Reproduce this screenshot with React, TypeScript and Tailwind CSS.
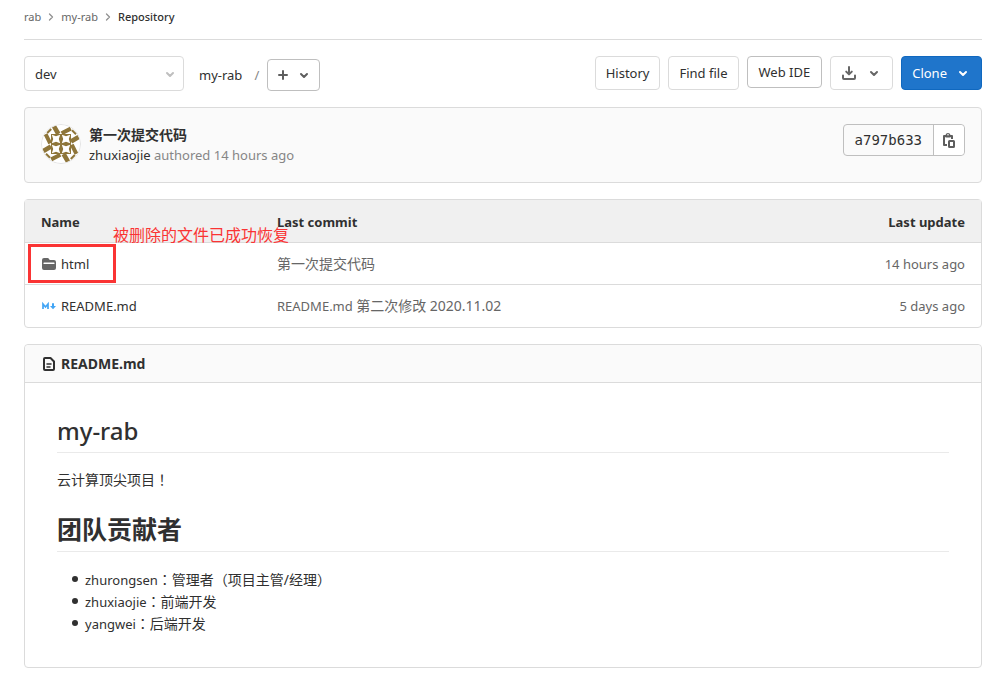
import type { ReactNode } from "react";

const stroke = { fill: "none", stroke: "currentColor", strokeWidth: 2, strokeLinecap: "round", strokeLinejoin: "round" } as const;

function ChevronDown({ className = "" }: { className?: string }) {
  return (
    <svg viewBox="0 0 16 16" className={`size-4 shrink-0 ${className}`} aria-hidden="true">
      <path d="M5 7l3 3 3-3" {...stroke} />
    </svg>
  );
}

function ChevronRight() {
  return (
    <svg viewBox="0 0 8 8" className="size-2 shrink-0 text-[#919191]" aria-hidden="true">
      <path d="M2.5 1l3 3-3 3" {...stroke} strokeWidth={1.3} />
    </svg>
  );
}

function PlusIcon() {
  return (
    <svg viewBox="0 0 16 16" className="size-4 text-[#5e5e5e]" aria-hidden="true">
      <path d="M8 4v8M4 8h8" {...stroke} />
    </svg>
  );
}

function DownloadIcon() {
  return (
    <svg viewBox="0 0 16 16" className="size-4 text-[#666]" aria-hidden="true">
      <path d="M8 2v7M5.2 6.6L8 9.4l2.8-2.8" {...stroke} />
      <path d="M2 10.5V13a1 1 0 001 1h10a1 1 0 001-1v-2.5" {...stroke} />
    </svg>
  );
}

function CopyIcon() {
  return (
    <svg viewBox="0 0 16 16" className="size-4 text-[#5e5e5e]" aria-hidden="true">
      <path d="M6 13H3V4h8v3" {...stroke} strokeLinecap="butt" />
      <path d="M4.5 3a2.6 2.6 0 015 0v2.5h-5z" fill="currentColor" />
      <circle cx="7" cy="2.8" r="0.8" fill="#fff" />
      <rect x="8" y="9" width="5" height="6" rx="0.5" {...stroke} />
    </svg>
  );
}

function FolderIcon() {
  return (
    <svg viewBox="0 0 16 16" className="size-4 shrink-0 text-[#666]" aria-hidden="true">
      <path
        fillRule="evenodd"
        fill="currentColor"
        d="M3 2h3.6c.5 0 1 .3 1.3.7L8.7 4H13a2 2 0 012 2v6a2 2 0 01-2 2H3a2 2 0 01-2-2V4a2 2 0 012-2zm0 4.5a.5.5 0 00-.5.5v1h11V7a.5.5 0 00-.5-.5z"
      />
    </svg>
  );
}

function MarkdownIcon() {
  return (
    <svg viewBox="0 0 16 16" className="size-4 shrink-0 text-[#42a5f5]" aria-hidden="true">
      <path d="M2 11V6l2.5 3L7 6v5" fill="none" stroke="currentColor" strokeWidth="1.7" />
      <path d="M11 5.2h2v2.9h2L12 11.2 9 8.1h2z" fill="currentColor" />
    </svg>
  );
}

function DocumentIcon() {
  return (
    <svg viewBox="0 0 16 16" className="size-4 shrink-0 text-[#303030]" aria-hidden="true">
      <path d="M3 3a1 1 0 011-1h5.5L13 5.5V13a1 1 0 01-1 1H4a1 1 0 01-1-1z" {...stroke} />
      <path d="M6 8h4M6 11h3" {...stroke} strokeWidth={1.5} />
    </svg>
  );
}

function Identicon() {
  return (
    <svg viewBox="0 0 40 40" className="size-10 shrink-0 rounded-full" role="img" aria-label="zhuxiaojie">
      <circle cx="20" cy="20" r="20" fill="#fff" />
      {[0, 90, 180, 270].map((angle) => (
        <g key={angle} transform={`rotate(${angle} 20 20)`}>
          <path d="M10 10h10v10H10z" fill="#8e7539" />
          <path d="M10.8 10.8L15 12.2l4.2-1.4L17.8 15l1.4 4.2L15 17.8l-4.2 1.4L12.2 15z" fill="#fff" />
          <path d="M13 2.4L17.4 10" stroke="#8e7539" strokeWidth="4.6" />
          <path d="M20.6 9.2L29.8 4.6" stroke="#8e7539" strokeWidth="4" />
          <path d="M31 6.2l4 4" stroke="#8e7539" strokeWidth="2" />
        </g>
      ))}
      <circle cx="20" cy="20" r="19.5" fill="none" stroke="#e3e3e3" />
    </svg>
  );
}

/* Chinese text is set one step larger than the Latin text around it. */
function Han({ children }: { children: ReactNode }) {
  return <span className="text-sm">{children}</span>;
}

/* Full-width punctuation, centred in its cell. */
function Mark({ children }: { children: ReactNode }) {
  return <span className="font-['Noto_Sans_CJK_TC',sans-serif] text-sm">{children}</span>;
}

const members = [
  { name: "zhurongsen", role: "管理者（项目主管/经理）" },
  { name: "zhuxiaojie", role: "前端开发" },
  { name: "yangwei", role: "后端开发" },
];

const files = [
  { name: "html", commit: <Han>第一次提交代码</Han>, updated: "14 hours ago", icon: <FolderIcon />, marked: true },
  { name: "README.md", commit: <>README.md <Han>第二次修改 2020.11.02</Han></>, updated: "5 days ago", icon: <MarkdownIcon />, marked: false },
];

const button = "flex items-center rounded border bg-white text-[#303030]";

export default function App() {
  return (
    <div className="min-h-screen bg-white pr-[25px] pb-3 pl-6 font-['Noto_Sans','Noto_Sans_CJK_SC',sans-serif] text-[13px] leading-5 text-[#303030]">
      <nav aria-label="Breadcrumb" className="flex h-10 items-start border-b border-[#dbdbdb] pt-2 text-[11px] leading-[18px]">
        <ol className="flex items-center gap-1.5">
          <li><a href="#rab" className="text-[#666]">rab</a></li>
          <li><ChevronRight /></li>
          <li><a href="#my-rab" className="text-[#666]">my-rab</a></li>
          <li><ChevronRight /></li>
          <li><a href="#repository" className="font-medium">Repository</a></li>
        </ol>
      </nav>

      <div className="mt-4 flex items-start justify-between">
        <div className="flex items-end">
          <div className="relative w-40">
            <select aria-label="Branch" className="h-[35px] w-full appearance-none rounded border border-[#dbdbdb] bg-white px-2.5">
              <option>dev</option>
            </select>
            <ChevronDown className="pointer-events-none absolute top-2.5 right-1.5 text-[#bfbfbf]" />
          </div>
          <a href="#root" className="ml-[15px] pb-1.5">my-rab</a>
          <span className="mx-2 pb-1.5 pl-1 text-[#868686]">/</span>
          <button aria-label="Add" className={`${button} h-8 gap-[5px] border-[#bfbfbf] px-[7px]`}>
            <PlusIcon />
            <ChevronDown className="text-[#5e5e5e]" />
          </button>
        </div>
        <div className="flex items-start gap-2">
          <button className={`${button} h-[34px] border-[#dbdbdb] px-2.5`}>History</button>
          <button className={`${button} h-[34px] border-[#dbdbdb] px-2.5`}>Find file</button>
          <button className={`${button} h-8 border-[#bfbfbf] px-[11px]`}>Web IDE</button>
          <button aria-label="Download" className={`${button} h-[34px] gap-[9px] border-[#dbdbdb] px-2.5`}>
            <DownloadIcon />
            <ChevronDown className="text-[#666]" />
          </button>
          <button className="flex h-[34px] items-center gap-2 rounded border border-[#1068bf] bg-[#1f75cb] px-2.5 text-white">
            Clone
            <ChevronDown />
          </button>
        </div>
      </div>

      <section className="mt-4 flex h-[76px] items-start justify-between rounded border border-[#dbdbdb] bg-[#fafafa] p-4">
        <div className="flex gap-2">
          <Identicon />
          <div className="leading-[21px]">
            <a href="#commit" className="block text-sm leading-[21px] font-bold">第一次提交代码</a>
            <p className="text-[#868686]">
              <a href="#zhuxiaojie" className="text-[#303030]">zhuxiaojie</a> authored <time>14 hours ago</time>
            </p>
          </div>
        </div>
        <div className="flex h-8 rounded border border-[#bfbfbf]">
          <span className="flex items-center px-[11px] font-['DejaVu_Sans_Mono',monospace] text-sm">a797b633</span>
          <button aria-label="Copy commit SHA" className="flex items-center rounded-r border-l border-[#bfbfbf] bg-white px-[7px]">
            <CopyIcon />
          </button>
        </div>
      </section>

      <div className="mt-4 rounded border border-[#dbdbdb]">
        <table className="w-full border-collapse">
          <thead>
            <tr className="h-[42px] border-b border-[#dbdbdb] bg-[#f0f0f0]">
              <th className="w-[236px] px-4 pt-0.5 text-left">Name</th>
              <th className="px-4 pt-0.5 text-left">Last commit</th>
              <th className="px-4 pt-0.5 text-right">Last update</th>
            </tr>
          </thead>
          <tbody>
            {files.map((file) => (
              <tr key={file.name} className="h-[42px] border-b border-[#dbdbdb] last:h-[43px] last:border-b-0">
                <td className="relative px-4 pt-px">
                  <a href={`#${file.name}`} className="flex items-center gap-1">
                    {file.icon}
                    {file.name}
                  </a>
                  {file.marked && (
                    <>
                      <span className="absolute top-px left-[3px] h-[39px] w-[88px] border-3 border-[#fa3434]" />
                      <span className="absolute -top-5 left-[88px] text-base leading-6 whitespace-nowrap text-[#fa3434]">被删除的文件已成功恢复</span>
                    </>
                  )}
                </td>
                <td className="px-4 pt-px text-[#666]">{file.commit}</td>
                <td className="px-4 pt-px text-right text-[#666]">{file.updated}</td>
              </tr>
            ))}
          </tbody>
        </table>
      </div>

      <article className="mt-4 rounded border border-[#dbdbdb]">
        <header className="flex h-[38px] items-center gap-1 rounded-t border-b border-[#dbdbdb] bg-[#fafafa] px-4 text-sm font-bold">
          <DocumentIcon />
          README.md
        </header>
        <div className="px-8 pt-8 pb-[33px]">
          <h1 className="h-[38px] border-b border-[#eaeaea] text-2xl leading-8 font-medium">my-rab</h1>
          <p className="mt-4 text-sm leading-[22px]">云计算顶尖项目<Mark>！</Mark></p>
          <h1 className="mt-6 h-[37px] border-b border-[#eaeaea] text-[25px] leading-7 font-bold">团队贡献者</h1>
          <ul className="mt-4 pl-[15px]">
            {members.map((member) => (
              <li
                key={member.name}
                className="flex h-[22px] items-center gap-[7px] before:size-1.5 before:rounded-full before:bg-[#303030]"
              >
                <span>{member.name}<Mark>：</Mark><Han>{member.role}</Han></span>
              </li>
            ))}
          </ul>
        </div>
      </article>
    </div>
  );
}
